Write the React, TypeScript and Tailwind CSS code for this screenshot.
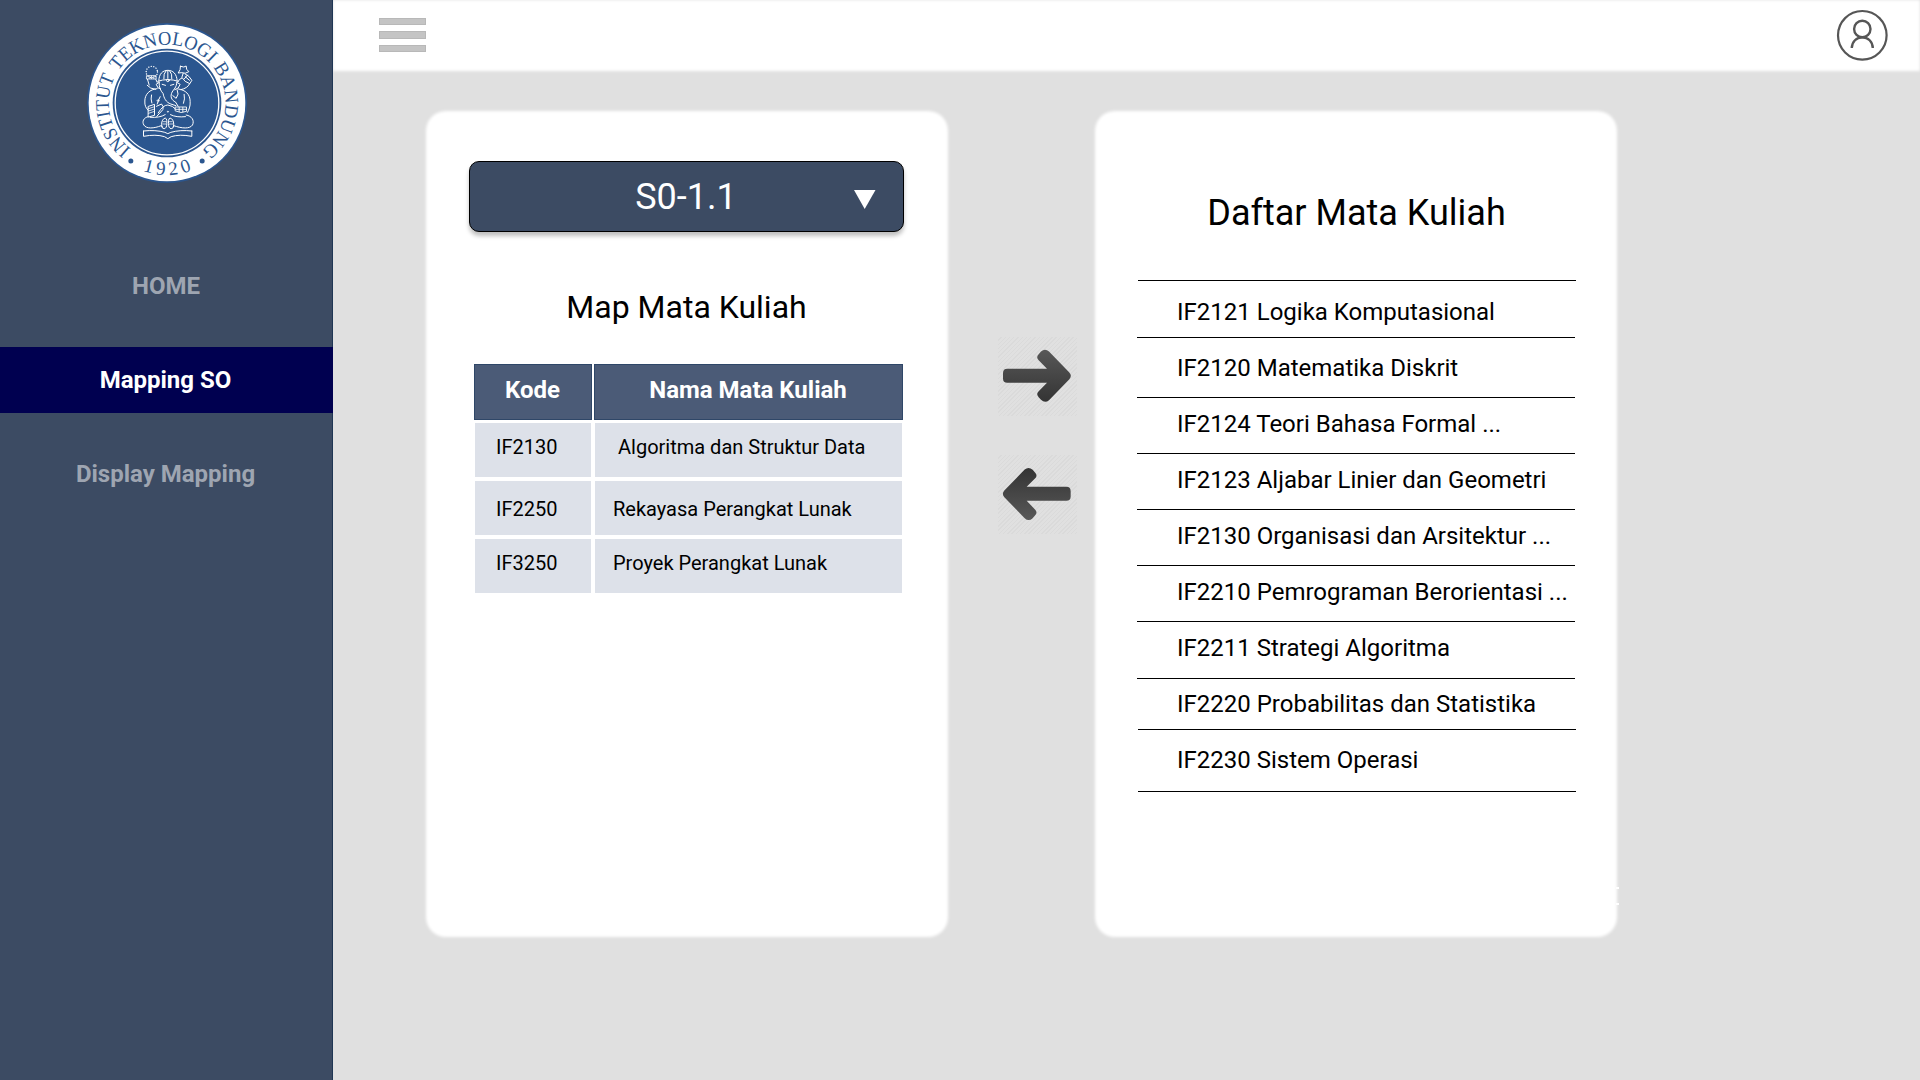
const FONT = "font-['Roboto',sans-serif]";

const navItems = [
  { label: "HOME", style: "text-[#9ea5b1]" },
  { label: "Mapping SO", style: "pr-px bg-[#000050] text-white" },
  { label: "Display Mapping", style: "pr-px text-[#9ea5b1]" },
];

const mapped = [
  { code: "IF2130", name: "Algoritma dan Struktur Data", pad: "pt-3", indent: "pl-[23px]" },
  { code: "IF2250", name: "Rekayasa Perangkat Lunak", pad: "pt-4", indent: "pl-[18px]" },
  { code: "IF3250", name: "Proyek Perangkat Lunak", pad: "pt-3", indent: "pl-[18px]" },
];

const courses = [
  { label: "IF2121 Logika Komputasional", height: "h-[57px]", pad: "pt-[17px]", line: "ml-px" },
  { label: "IF2120 Matematika Diskrit", height: "h-[60px]", pad: "pt-4", line: "" },
  { label: "IF2124 Teori Bahasa Formal ...", height: "h-14", pad: "pt-3", line: "" },
  { label: "IF2123 Aljabar Linier dan Geometri", height: "h-14", pad: "pt-3", line: "" },
  { label: "IF2130 Organisasi dan Arsitektur ...", height: "h-14", pad: "pt-3", line: "" },
  { label: "IF2210 Pemrograman Berorientasi ...", height: "h-14", pad: "pt-3", line: "" },
  { label: "IF2211 Strategi Algoritma", height: "h-[57px]", pad: "pt-3", line: "" },
  { label: "IF2220 Probabilitas dan Statistika", height: "h-[51px]", pad: "pt-[11px]", line: "" },
  { label: "IF2230 Sistem Operasi", height: "h-[62px]", pad: "pt-4", line: "ml-px" },
];

const ringWords = [
  { word: "INSTITUT", offset: 116, length: 240 },
  { word: "TEKNOLOGI", offset: 376, length: 318 },
  { word: "BANDUNG", offset: 708, length: 281 },
];

function Logo() {
  return (
    <svg className="ml-px h-[162px] w-[162px]" viewBox="45.5 35 486 486" fill="none">
      <defs>
        <path id="ring-top" d="M288.5 453 A175 175 0 1 1 288.6 453" />
        <path id="ring-bottom" d="M72.5 278 A216 216 0 0 0 504.5 278" />
      </defs>
      <circle cx="288.5" cy="278" r="240" fill="#2b568f" />
      <circle cx="288.5" cy="278" r="235" fill="#fff" />
      <circle cx="288.5" cy="278" r="163" fill="#2b568f" />
      <circle cx="288.5" cy="278" r="155.500" stroke="#fff" strokeWidth="4" />
      {ringWords.map((item) => (
        <text
          key={item.word}
          fill="#2b568f"
          fontSize="58"
          textLength={item.length}
          lengthAdjust="spacingAndGlyphs"
          className="font-['Liberation_Serif',serif]"
        >
          <textPath href="#ring-top" startOffset={item.offset} textLength={item.length} lengthAdjust="spacingAndGlyphs">
            {item.word}
          </textPath>
        </text>
      ))}
      <text fill="#2b568f" fontSize="57" textAnchor="middle" letterSpacing="12" className="font-['Liberation_Serif',serif]">
        <textPath href="#ring-bottom" startOffset="51%">
          1920
        </textPath>
      </text>
      <circle cx="180" cy="452" r="7.500" fill="#2b568f" />
      <circle cx="394" cy="452" r="7.500" fill="#2b568f" />
      <g stroke="#fff" strokeWidth="3" strokeLinecap="round" strokeLinejoin="round">
        {/* crown */}
        <path d="M264 212 C264 190 276 180 291 180 C306 180 318 190 319 212" />
        <path d="M261 213 Q291 202 322 213" />
        <path d="M279 205 Q277 190 286 181 M303 205 Q305 190 296 181 M291 203 V181" />
        <circle cx="291" cy="210" r="4" />
        {/* head and trunk */}
        <path d="M265 216 C264 232 269 240 277 250 C279 262 285 276 300 281 L315 286" />
        <path d="M318 216 C317 232 309 236 304 245 C297 258 302 270 314 275 L322 288" />
        <path d="M274 222 L284 225 M309 222 L299 225" />
        <path d="M265 216 L256 222 L262 233 L269 235 M318 216 L328 222 L322 233 L312 238" />
        <path d="M319 238 Q326 252 316 264 L306 256" />
        {/* ring of beads in the raised hand */}
        <circle cx="243" cy="185" r="17" strokeDasharray="0.1 7.530" strokeWidth="4.200" />
        <path d="M228 196 H256 V206 H228 Z M235 197 V205 M242 197 V205 M249 197 V205" strokeWidth="2.400" />
        <path d="M230 207 L235 224 M255 207 L259 216 M229 225 Q238 236 254 237" />
        {/* axe in the other hand */}
        <path d="M329 168 Q341 173 346 167 Q345 178 354 184 Q343 192 333 187 L322 188 Q330 179 329 168 Z" />
        <path d="M337 189 L333 201 L343 213 L357 220 L363 210 L354 198 L343 191 M343 199 L356 210 M350 194 L340 206" />
        <path d="M333 203 Q323 207 322 213 M356 221 Q350 234 330 238" />
        {/* shoulders and arms */}
        <path d="M259 235 C236 237 222 252 222 272 C221 286 226 294 232 300" />
        <path d="M323 236 C344 239 358 252 358 274 C359 288 354 299 350 306" />
        <path d="M242 254 Q239 266 243 278 M340 252 Q343 266 338 279 M268 259 Q263 268 259 281" />
        <path d="M262 267 V275 M258 271 H266" strokeWidth="2.200" />
        <path d="M257 288 L272 281 Q280 289 276 298 L258 318" />
        <path d="M262 308 Q276 284 291 284 Q306 286 314 296" />
        {/* book */}
        <path d="M233 288 L251 282 V315 L233 320 Z" />
        <path d="M233 295 L251 289 M233 302 L251 296 M233 309 L251 303" strokeWidth="2.400" />
        {/* bowl */}
        <path d="M314 290 H347 V303 Q331 311 314 302 Z M315 297 H347 M325 291 V304 M336 291 V305" strokeWidth="2.600" />
        <circle cx="291" cy="304" r="2" fill="#fff" strokeWidth="1" />
        {/* crossed legs */}
        <path d="M232 319 C218 322 213 334 219 344 C226 356 249 355 271 346" />
        <path d="M346 314 C364 317 371 331 365 344 C357 356 334 355 309 346" />
        <path d="M238 321 Q266 323 283 313 M344 319 Q316 322 299 313" />
        <path d="M273 348 Q270 333 279 325 Q289 318 288 340 Q288 354 280 355 Q273 355 273 348 Z" />
        <path d="M308 348 Q311 333 302 325 Q292 318 293 340 Q293 354 301 355 Q308 355 308 348 Z" />
        <path d="M277 334 H285 M276 341 H286 M296 334 H304 M296 341 H306" strokeWidth="2.200" />
        {/* pedestal */}
        <path d="M218 362 V378 Q255 371 281 379 L291 385 L301 379 Q326 371 363 378 V362" />
        <path d="M218 362 Q255 358 282 366 L291 370 L300 366 Q328 358 363 362" />
      </g>
    </svg>
  );
}

function UserIcon() {
  return (
    <svg className="h-[52px] w-[52px]" viewBox="0 0 52 52" fill="none" stroke="#565656">
      <circle cx="26.300" cy="26.300" r="24.300" strokeWidth="2.200" />
      <circle cx="26.300" cy="20" r="8.200" strokeWidth="2.400" />
      <path d="M15.800 39 C16 32.500 20.500 28.400 26.300 28.400 C32.100 28.400 36.600 32.500 36.800 39" strokeWidth="2.400" />
    </svg>
  );
}

function ArrowButton({ direction }: { direction: "left" | "right" }) {
  const id = "arrow-" + direction;
  return (
    <button className="block h-[79px] w-[79px] bg-[repeating-linear-gradient(135deg,#e0e0e0_0px,#e0e0e0_2px,#dadada_2px,#dadada_3px)]">
      <svg className="h-full w-full" viewBox="54 51.500 237 237">
        <defs>
          <linearGradient id={id} x1="0" y1="0" x2="0" y2="1">
            <stop offset="0" stopColor="#585858" />
            <stop offset="1" stopColor="#343434" />
          </linearGradient>
        </defs>
        <path
          transform={direction === "left" ? "rotate(180 170.5 168)" : undefined}
          fill={"url(#" + id + ")"}
          d="M82 147 H201 L176 121 Q167 112 176 103 L183 95 Q195 84 207 95 L268 158 Q277 168 268 178 L207 241 Q195 251 183 240 L176 232 Q167 222 176 214 L201 189 H82 Q69 189 69 176 V160 Q69 147 82 147Z"
        />
      </svg>
    </button>
  );
}

export default function App() {
  return (
    <div className={`flex h-[1080px] w-[1920px] overflow-hidden bg-[#e0e0e0] text-black ${FONT}`}>
      <aside className="z-10 flex w-[333px] shrink-0 flex-col items-center border-r border-[#1f3654] bg-[#3c4b63] pt-[22px]">
        <Logo />
        <nav className="mt-[69px] flex w-[333px] flex-col gap-7">
          {navItems.map((item) => (
            <a
              key={item.label}
              className={`block h-[66px] pt-[19px] text-center text-2xl leading-7 font-bold ${item.style}`}
            >
              {item.label}
            </a>
          ))}
        </nav>
      </aside>

      <div className="flex flex-1 flex-col">
        <header className="relative flex h-[71px] shrink-0 items-start justify-between pl-[46px]">
          <div className="absolute inset-0 bg-white blur-[1.5px]" />
          <button className="relative mt-[18px] flex flex-col gap-1.5">
            <span className="h-[7px] w-[47px] border border-[#b8b8b8] bg-[#c4c4c4]" />
            <span className="h-2 w-[47px] border border-[#b8b8b8] bg-[#c4c4c4]" />
            <span className="h-[7px] w-[47px] border border-[#b8b8b8] bg-[#c4c4c4]" />
          </button>
          <button className="relative mt-[9px] mr-8">
            <UserIcon />
          </button>
        </header>

        <main className="flex items-start pt-10 pl-[93px]">
          <section className="relative h-[826px] w-[522px] pt-[50px] pl-[43px]">
            <div className="absolute inset-0 rounded-[20px] bg-white blur-[1.5px]" />
            <div className="relative w-[435px]">
              <button className="flex h-[71px] w-full items-center rounded-[10px] border border-black bg-[#3c4b63] pr-[27px] pl-[58px] text-white shadow-[0_4px_4px_rgba(0,0,0,0.25)]">
                <span className="flex-1 pt-px pr-[10px] text-center text-4xl leading-[42px]">S0-1.1</span>
                <svg className="mt-[5px] h-[19px] w-[22px]" viewBox="0 0 22 19" fill="#fff">
                  <path d="M0 0 H21.500 L10.700 19 Z" />
                </svg>
              </button>
              <h2 className="mt-[56px] text-center text-[32px] leading-[38px]">Map Mata Kuliah</h2>
              <div className="mt-[38px] ml-[5px] w-[429px]">
                <div className="grid grid-cols-[118px_309px] gap-0.5 text-center text-2xl leading-7 font-bold text-white">
                  <div className="h-14 border border-[#2f4768] bg-[#4b5b77] pt-[11px] pr-px">Kode</div>
                  <div className="h-14 border border-[#2f4768] bg-[#4b5b77] pt-[11px] pr-px">Nama Mata Kuliah</div>
                </div>
                <div className="mt-[3px] flex flex-col gap-1 px-px">
                  {mapped.map((row) => (
                    <div key={row.code} className="grid grid-cols-[116px_307px] gap-1 text-xl leading-6">
                      <div className={`h-[54px] bg-[#dde1e9] pl-[21px] ${row.pad}`}>{row.code}</div>
                      <div className={`h-[54px] bg-[#dde1e9] ${row.pad} ${row.indent}`}>{row.name}</div>
                    </div>
                  ))}
                </div>
              </div>
            </div>
          </section>

          <div className="mt-[226px] ml-[50px] flex flex-col gap-[39px]">
            <ArrowButton direction="right" />
            <ArrowButton direction="left" />
          </div>

          <section className="relative ml-[18px] h-[826px] w-[522px] pt-[81px]">
            <div className="absolute inset-0 rounded-[20px] bg-white blur-[1.5px]" />
            <div className="absolute top-[776px] -right-0.5 h-[18px] w-[3px] border-y-2 border-white" />
            <div className="relative">
              <h2 className="pl-px text-center text-4xl leading-[42px]">Daftar Mata Kuliah</h2>
              <ul className="mt-[46px] ml-[42px] w-[439px]">
                {courses.map((course) => (
                  <li key={course.label} className={course.height}>
                    <div className={`h-px w-[438px] bg-black ${course.line}`} />
                    <div className={`pl-10 text-2xl leading-7 ${course.pad}`}>{course.label}</div>
                  </li>
                ))}
                <li className="ml-px h-px w-[438px] bg-black" />
              </ul>
            </div>
          </section>
        </main>
      </div>
    </div>
  );
}
